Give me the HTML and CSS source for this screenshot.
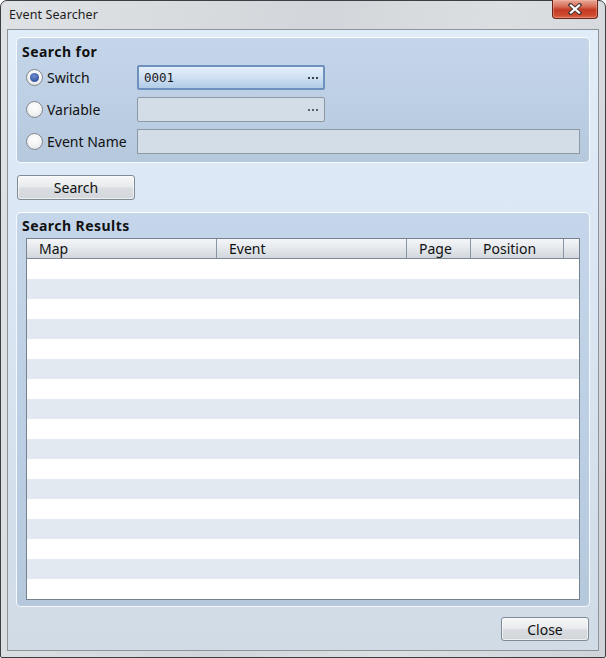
FILE: index.html
```html
<!DOCTYPE html>
<html>
<head>
<meta charset="utf-8">
<link rel="stylesheet" href="styles.css">
</head>
<body>
<div class="window">
  <div class="titlebar">
    <span class="title">Event Searcher</span>
    <button class="close-x" aria-label="Close">
      <svg width="16" height="12" viewBox="0 0 16 12"><path d="M3.5 2 L12.5 10 M12.5 2 L3.5 10" stroke="#4a3a38" stroke-width="4" stroke-linecap="square"/><path d="M4 2.5 L12 9.5 M12 2.5 L4 9.5" stroke="#ffffff" stroke-width="2.2" stroke-linecap="square"/></svg>
    </button>
  </div>
  <div class="client">
    <section class="panel search-for">
      <h2 class="panel-title">Search for</h2>
      <div class="row">
        <label class="opt"><span class="radio checked"></span>Switch</label>
        <div class="picker active"><span class="mono">0001</span><span class="dots"><i></i><i></i><i></i></span></div>
      </div>
      <div class="row">
        <label class="opt"><span class="radio"></span>Variable</label>
        <div class="picker"><span></span><span class="dots"><i></i><i></i><i></i></span></div>
      </div>
      <div class="row">
        <label class="opt"><span class="radio"></span>Event Name</label>
        <div class="textbox"></div>
      </div>
    </section>
    <div class="btn-row"><button class="btn search-btn">Search</button></div>
    <section class="panel results">
      <h2 class="panel-title">Search Results</h2>
      <div class="table">
        <div class="thead">
          <div class="th c-map">Map</div>
          <div class="th c-event">Event</div>
          <div class="th c-page">Page</div>
          <div class="th c-pos">Position</div>
          <div class="th c-rest"></div>
        </div>
        <div class="tbody">
          <div class="tr"></div><div class="tr"></div><div class="tr"></div><div class="tr"></div>
          <div class="tr"></div><div class="tr"></div><div class="tr"></div><div class="tr"></div>
          <div class="tr"></div><div class="tr"></div><div class="tr"></div><div class="tr"></div>
          <div class="tr"></div><div class="tr"></div><div class="tr"></div><div class="tr"></div>
          <div class="tr"></div>
        </div>
      </div>
    </section>
    <div class="footer"><button class="btn close-btn">Close</button></div>
  </div>
</div>
</body>
</html>
```
FILE: styles.css
```css
* { box-sizing: border-box; }
html, body { margin: 0; padding: 0; }
body {
  width: 606px;
  height: 658px;
  background: #ffffff;
  font-family: "Noto Sans", "DejaVu Sans", sans-serif;
  font-size: 14px;
  color: #111;
}
.window {
  width: 606px;
  height: 658px;
  border: 1px solid #3b3f44;
  border-radius: 7px 7px 2px 2px;
  background: linear-gradient(100deg, #dfe2e5 0%, #d2d6da 45%, #dcdfe2 70%, #d0d4d8 100%);
  padding: 0 6px 6px 6px;
  display: flex;
  flex-direction: column;
}
.titlebar {
  height: 28px;
  display: flex;
  justify-content: space-between;
  align-items: flex-start;
}
.title {
  margin-top: 5px;
  margin-left: 2px;
  font-size: 12.5px;
  color: #1d1d1d;
  letter-spacing: 0.1px;
}
.close-x {
  width: 46px;
  height: 19px;
  margin-top: -1px;
  margin-right: 1px;
  padding: 0;
  border: 1px solid #6b241a;
  border-top: none;
  border-radius: 0 0 4px 4px;
  background: linear-gradient(#e8a898 0%, #d9705a 35%, #c23a22 55%, #cf4b30 85%, #dc6c52 100%);
  box-shadow: inset 0 0 0 1px rgba(255, 200, 180, 0.35);
  display: flex;
  align-items: center;
  justify-content: center;
}
.client {
  flex: 1;
  border: 1px solid #8b939b;
  background: linear-gradient(#e1ecf9 0%, #dae6f3 40%, #d0dbe6 100%);
  display: flex;
  flex-direction: column;
  padding: 7px 8px 9px 8px;
}
.panel {
  background: linear-gradient(#c5d6ea 0%, #bccee3 60%, #b6c8dc 100%);
  border: 1px solid #f5f9fd;
  border-top-color: #fbfdff;
  border-radius: 5px;
}
.panel-title {
  margin: 0;
  font-size: 14px;
  font-weight: bold;
  color: #111;
  line-height: 16px;
  letter-spacing: 0.45px;
}
.search-for {
  height: 126px;
  padding: 5px 9px 0 5px;
}
.search-for .panel-title { height: 22px; padding-top: 1px; }
.row {
  display: flex;
  align-items: center;
  height: 25px;
  margin-bottom: 7px;
}
.opt {
  width: 111px;
  display: flex;
  align-items: center;
  margin-left: 4px;
  color: #111;
}
.radio {
  width: 17px;
  height: 17px;
  border-radius: 50%;
  border: 1px solid #7f878f;
  background: radial-gradient(circle at 50% 35%, #ffffff 0%, #f2f2f2 55%, #d6d9dc 100%);
  margin-right: 4px;
  display: flex;
  align-items: center;
  justify-content: center;
  flex: none;
}
.radio.checked::after {
  content: "";
  width: 9px;
  height: 9px;
  border-radius: 50%;
  background: radial-gradient(circle at 45% 35%, #6f8fd0 0%, #3c5ca8 60%, #2c4890 100%);
}
.picker {
  width: 188px;
  height: 25px;
  border: 1px solid #8e99a4;
  border-radius: 2px;
  background: #d3dde7;
  display: flex;
  align-items: center;
  justify-content: space-between;
  padding: 0 6px 0 6px;
}
.picker.active {
  border: 2px solid #6d91bc;
  background: linear-gradient(#e4eefa 0%, #d2e2f4 45%, #b2cbe7 100%);
  padding-left: 5px;
  padding-right: 5px;
}
.mono {
  font-family: "DejaVu Sans Mono", "Liberation Mono", monospace;
  font-size: 12.5px;
  color: #1a1a1a;
}
.dots {
  display: flex;
  gap: 2px;
  margin-top: 1px;
}
.dots i {
  display: block;
  width: 2px;
  height: 2px;
  background: #3c4248;
}
.picker:not(.active) .dots i { background: #5a6168; }
.textbox {
  flex: 1;
  height: 25px;
  border: 1px solid #8e99a4;
  background: #d3dde7;
}
.btn-row { display: flex; margin-top: 12px; }
.btn {
  font-family: "Noto Sans", "DejaVu Sans", sans-serif;
  font-size: 14px;
  color: #111;
  border: 1px solid #7e8a96;
  border-radius: 3px;
  background: linear-gradient(#f6f7f8 0%, #e9ebed 45%, #d8dce0 55%, #d3d7db 100%);
  box-shadow: inset 0 0 0 1px rgba(255, 255, 255, 0.6);
  padding: 0;
}
.search-btn { width: 118px; height: 25px; margin-left: 1px; }
.results {
  margin-top: 12px;
  height: 395px;
  padding: 4px 9px 6px 9px;
  display: flex;
  flex-direction: column;
}
.results .panel-title { height: 21px; margin-left: -4px; padding-top: 1px; }
.table {
  flex: 1;
  border: 1px solid #76828e;
  background: #ffffff;
  display: flex;
  flex-direction: column;
  overflow: hidden;
}
.thead {
  display: flex;
  height: 20px;
  border-bottom: 1px solid #7c8894;
  background: linear-gradient(#f4f6f8 0%, #e4e8ec 50%, #d2d7dd 100%);
}
.th {
  border-right: 1px solid #8a96a2;
  padding-left: 12px;
  line-height: 19px;
  color: #111;
}
.c-map { width: 190px; }
.c-event { width: 190px; }
.c-page { width: 64px; }
.c-pos { width: 93px; }
.c-rest { flex: 1; border-right: none; }
.tbody { flex: 1; }
.tr { height: 20px; background: #ffffff; }
.tr:nth-child(even) { background: #e3e9f0; }
.footer {
  display: flex;
  justify-content: flex-end;
  margin-top: 10px;
}
.close-btn { width: 88px; height: 24px; margin-right: 1px; }
```
